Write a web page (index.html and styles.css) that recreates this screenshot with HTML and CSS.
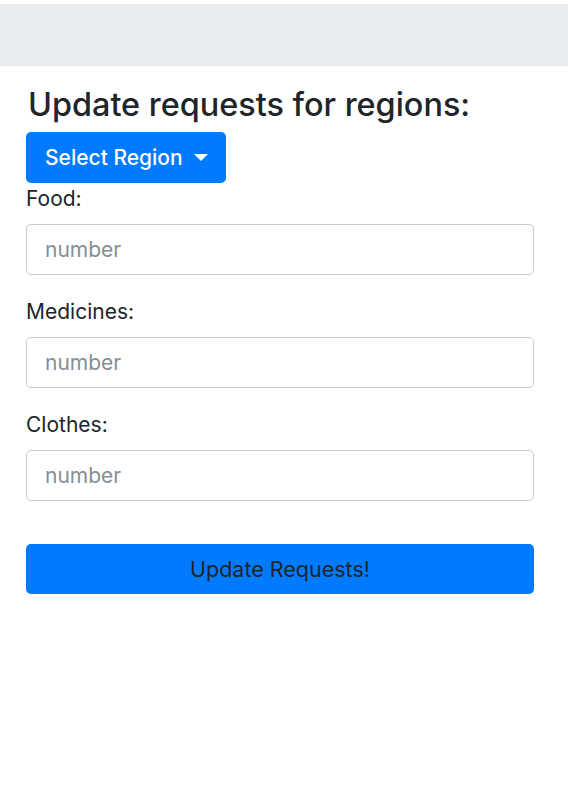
FILE: index.html
```html
<!DOCTYPE html>
<html lang="en">
<head>
<meta charset="utf-8">
<title>Update requests</title>
<link rel="stylesheet" href="styles.css">
</head>
<body>
<div class="topbar"></div>
<main class="container">
  <h3 class="title">Update requests for regions:</h3>
  <button class="btn-select" type="button">Select Region <span class="caret"></span></button>
  <form class="form">
    <div class="group">
      <label class="label" for="food">Food:</label>
      <input class="field" id="food" type="number" placeholder="number">
    </div>
    <div class="group">
      <label class="label" for="med">Medicines:</label>
      <input class="field" id="med" type="number" placeholder="number">
    </div>
    <div class="group">
      <label class="label" for="clothes">Clothes:</label>
      <input class="field" id="clothes" type="number" placeholder="number">
    </div>
    <button class="btn-submit" type="button">Update Requests!</button>
  </form>
</main>
</body>
</html>
```
FILE: styles.css
```css
* { box-sizing: border-box; }
html, body { margin: 0; padding: 0; background: #fff; }
body {
  font-family: Inter, "Liberation Sans", Arial, sans-serif;
  color: #212529;
  font-size: 21px;
}
.topbar {
  margin-top: 4px;
  height: 62px;
  background: #e9ecef;
}
.container {
  padding: 0 34px 0 26px;
}
.title {
  margin: 20px 0 7px 2px;
  font-size: 32.4px;
  line-height: 1.2;
  font-weight: 500;
}
.btn-select {
  display: inline-flex;
  align-items: center;
  height: 51px;
  padding: 0 18px 0 19px;
  border: 0;
  border-radius: 5px;
  background: #007bff;
  color: #fff;
  font-family: inherit;
  font-size: 21px;
  font-weight: 500;
}
.caret {
  display: inline-block;
  width: 0;
  height: 0;
  margin-left: 11px;
  border-top: 7px solid #fff;
  border-left: 7px solid transparent;
  border-right: 7px solid transparent;
}
.form { margin: 0; }
.group { margin-bottom: 21px; }
.label {
  display: block;
  line-height: 31px;
  margin-bottom: 10px;
  font-size: 21px;
}
.field {
  display: block;
  width: 100%;
  height: 51px;
  padding: 0 18px;
  border: 1px solid #cccccc;
  border-radius: 5px;
  font-family: inherit;
  font-size: 21px;
  color: #495057;
  background: #fff;
  -moz-appearance: textfield;
}
.field::-webkit-outer-spin-button,
.field::-webkit-inner-spin-button { -webkit-appearance: none; margin: 0; }
.field::placeholder { color: #868e96; }
.btn-submit {
  display: block;
  width: 100%;
  height: 50px;
  margin-top: 43px;
  border: 0;
  border-radius: 5px;
  background: #007bff;
  color: #212529;
  font-family: inherit;
  font-size: 21.5px;
}
```
